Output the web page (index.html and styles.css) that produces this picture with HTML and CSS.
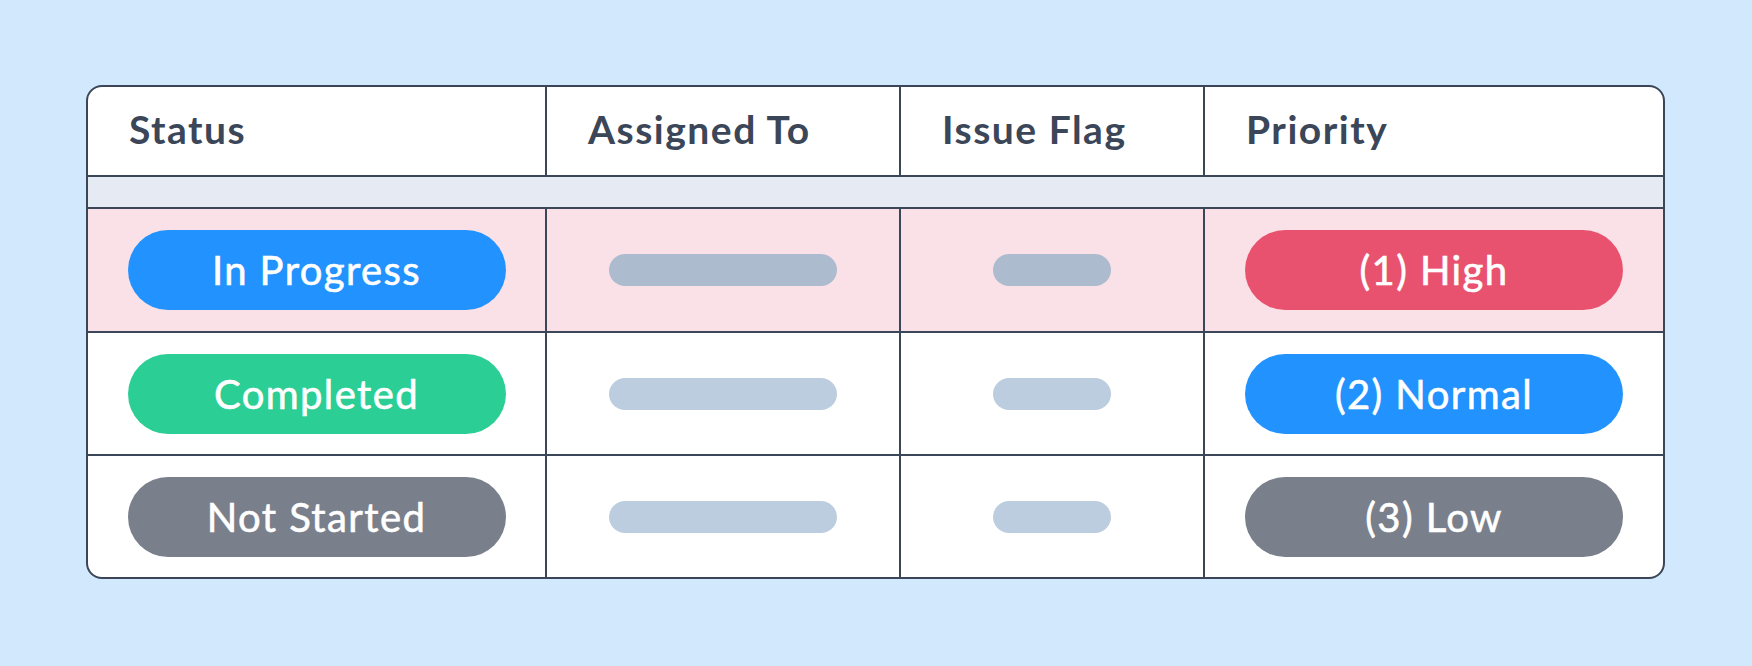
FILE: index.html
```html
<!DOCTYPE html>
<html lang="en">
<head>
  <meta charset="UTF-8">
  <title>Task board</title>
  <link rel="stylesheet" href="styles.css">
</head>
<body>
  <div class="page">
    <div class="table">
      <div class="cell head">Status</div>
      <div class="cell head">Assigned To</div>
      <div class="cell head">Issue Flag</div>
      <div class="cell head last">Priority</div>

      <div class="group"></div>

      <div class="cell hot"><span class="pill blue">In Progress</span></div>
      <div class="cell hot"><span class="bar wide"></span></div>
      <div class="cell hot"><span class="bar short"></span></div>
      <div class="cell hot last"><span class="pill red">(1) High</span></div>

      <div class="cell"><span class="pill green">Completed</span></div>
      <div class="cell"><span class="bar wide light"></span></div>
      <div class="cell"><span class="bar short light"></span></div>
      <div class="cell last"><span class="pill blue">(2) Normal</span></div>

      <div class="cell bottom"><span class="pill grey">Not Started</span></div>
      <div class="cell bottom"><span class="bar wide light"></span></div>
      <div class="cell bottom"><span class="bar short light"></span></div>
      <div class="cell bottom last"><span class="pill grey">(3) Low</span></div>
    </div>
  </div>
</body>
</html>
```

FILE: styles.css
```css
body {
  margin: 0;
  background-color: #d2e8fd;
  font-family: "Lato", "Open Sans", sans-serif;
  height: 666px;
}
.page {
  padding: 85px 0 0 86px;
}
.table {
  display: grid;
  grid-template-columns: 459px 354px 304px 458px;
  grid-template-rows: 90px 32px 124px 123px 121px;
  width: 1575px;
  border: 2px solid #3b4658;
  border-radius: 16px;
  overflow: hidden;
  background-color: white;
}
.cell {
  box-sizing: border-box;
  border-right: 2px solid #3b4658;
  border-bottom: 2px solid #3b4658;
  display: flex;
  align-items: center;
  justify-content: center;
}
.cell.last {
  border-right: none;
}
.cell.bottom {
  border-bottom: none;
}
.head {
  justify-content: flex-start;
  padding-left: 41px;
  padding-bottom: 5px;
  color: #3b4658;
  font-weight: bold;
  font-size: 39px;
  letter-spacing: 1.5px;
}
.group {
  grid-column: 1 / -1;
  box-sizing: border-box;
  background-color: #e5eaf3;
  border-bottom: 2px solid #3b4658;
}
.hot {
  background-color: #f9e1e7;
}
.pill {
  width: 378px;
  height: 80px;
  border-radius: 40px;
  color: white;
  font-size: 40px;
  letter-spacing: 1.4px;
  -webkit-text-stroke: 0.6px white;
  display: flex;
  align-items: center;
  justify-content: center;
}
.blue { background-color: #2192fe; }
.green { background-color: #2bce95; }
.grey { background-color: #7a808b; }
.red { background-color: #e9526f; }
.bar {
  height: 32px;
  border-radius: 16px;
  background-color: #adbbcf;
}
.bar.light {
  background-color: #bdcde0;
}
.wide { width: 228px; }
.short { width: 118px; }
```
